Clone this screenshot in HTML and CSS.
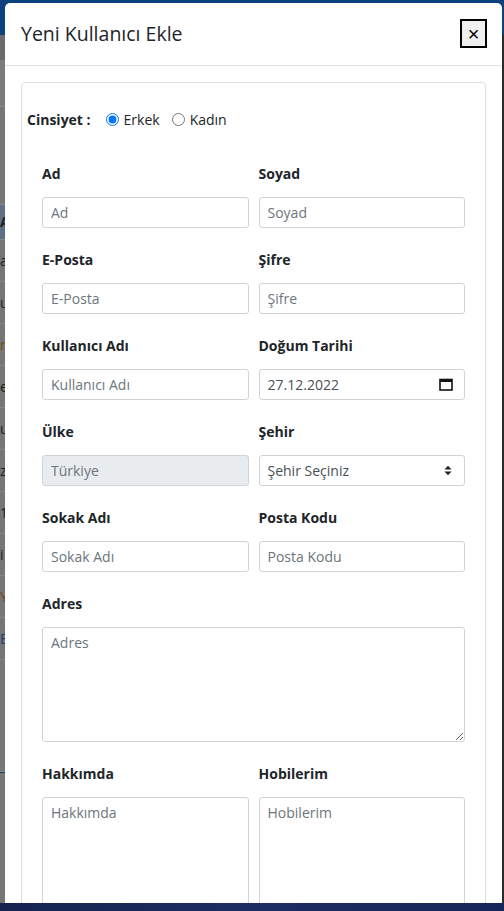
FILE: index.html
```html
<!DOCTYPE html>
<html lang="tr">
<head>
<meta charset="utf-8">
<title>Yeni Kullanıcı Ekle</title>
<link rel="stylesheet" href="styles.css">
</head>
<body>
<div class="page">
  <div class="page-top"></div>
  <div class="page-main">
    <div class="page-rows">
      <div class="row row-a"></div>
      <div class="row row-b"></div>
      <div class="row row-c"></div>
      <div class="row row-head"><span>A</span></div>
      <div class="row"><span>a</span></div>
      <div class="row"><span>u</span></div>
      <div class="row"><span class="orange">r</span></div>
      <div class="row"><span>e</span></div>
      <div class="row"><span>u</span></div>
      <div class="row"><span>z</span></div>
      <div class="row"><span>1</span></div>
      <div class="row"><span>i</span></div>
      <div class="row"><span class="orange">Y</span></div>
      <div class="row"><span class="blue">E</span></div>
      <div class="row row-tall"></div>
      <div class="row row-end"></div>
    </div>
    <div class="page-right"></div>
  </div>
  <div class="taskbar"></div>
</div>

<div class="modal">
  <div class="modal-header">
    <h5 class="modal-title">Yeni Kullanıcı Ekle</h5>
    <button class="close" type="button">×</button>
  </div>
  <div class="modal-body">
    <div class="card">
      <div class="gender">
        <b class="gender-label">Cinsiyet :</b>
        <input class="radio" type="radio" name="cinsiyet" checked>
        <span class="radio-text">Erkek</span>
        <input class="radio" type="radio" name="cinsiyet">
        <span class="radio-text">Kadın</span>
      </div>
      <div class="form-grid">
        <div class="group">
          <label class="label">Ad</label>
          <input class="control" placeholder="Ad">
        </div>
        <div class="group">
          <label class="label">Soyad</label>
          <input class="control" placeholder="Soyad">
        </div>
        <div class="group">
          <label class="label">E-Posta</label>
          <input class="control" placeholder="E-Posta">
        </div>
        <div class="group">
          <label class="label">Şifre</label>
          <input class="control" placeholder="Şifre">
        </div>
        <div class="group">
          <label class="label">Kullanıcı Adı</label>
          <input class="control" placeholder="Kullanıcı Adı">
        </div>
        <div class="group">
          <label class="label">Doğum Tarihi</label>
          <div class="control control-box">
            <input class="inner" value="27.12.2022">
            <svg class="cal" width="14" height="13" viewBox="0 0 14 13"><rect x="1" y="1.5" width="12" height="10.5" fill="none" stroke="#111" stroke-width="1.6"/><rect x="1" y="1" width="12" height="3" fill="#111"/></svg>
          </div>
        </div>
        <div class="group">
          <label class="label">Ülke</label>
          <input class="control" placeholder="Türkiye" disabled>
        </div>
        <div class="group">
          <label class="label">Şehir</label>
          <div class="control control-box">
            <span class="inner select-text">Şehir Seçiniz</span>
            <svg class="updown" width="8" height="11" viewBox="0 0 8 11"><path d="M0.5 4.5 L4 0.8 L7.5 4.5 Z" fill="#222"/><path d="M0.5 6.5 L4 10.2 L7.5 6.5 Z" fill="#222"/></svg>
          </div>
        </div>
        <div class="group">
          <label class="label">Sokak Adı</label>
          <input class="control" placeholder="Sokak Adı">
        </div>
        <div class="group">
          <label class="label">Posta Kodu</label>
          <input class="control" placeholder="Posta Kodu">
        </div>
        <div class="group wide">
          <label class="label">Adres</label>
          <textarea class="control area" placeholder="Adres"></textarea>
        </div>
        <div class="group">
          <label class="label">Hakkımda</label>
          <textarea class="control area" placeholder="Hakkımda"></textarea>
        </div>
        <div class="group">
          <label class="label">Hobilerim</label>
          <textarea class="control area" placeholder="Hobilerim"></textarea>
        </div>
      </div>
    </div>
  </div>
</div>
</body>
</html>
```

FILE: styles.css
```css
* { box-sizing: border-box; }

html, body {
  margin: 0;
  padding: 0;
  height: 911px;
  overflow: hidden;
}

body {
  font-family: "Open Sans", "Noto Sans", "Liberation Sans", sans-serif;
  font-size: 14px;
  color: #212529;
  background: #767676;
  position: relative;
}

/* dimmed page behind the modal */
.page {
  height: 911px;
  display: flex;
  flex-direction: column;
}

.page-top {
  height: 35px;
  background: #0e427e;
  flex: none;
}

.page-main {
  flex: 1;
  display: flex;
  min-height: 0;
}

.page-rows {
  flex: 1;
  display: flex;
  flex-direction: column;
}

.row {
  height: 42px;
  flex: none;
  display: flex;
  align-items: center;
  padding-left: 0;
  border-bottom: 1px solid #878787;
  font-size: 14px;
  line-height: 1;
  color: #1e1e1e;
}

.row span { white-space: nowrap; }
.row-a { height: 25px; background: #6b6b6b; border-bottom-color: #6b6b6b; }
.row-b { height: 47px; background: #7b7b7b; border-bottom-color: #8a8a8a; }
.row-c { height: 98px; }
.row-head { background: #5e6f86; height: 35px; font-weight: 700; }
.orange { color: #6e4a1a; }
.blue { color: #1d3c70; }
.row-tall { height: 112px; }
.row-end { border-bottom: none; border-top: 1px solid #123f7a; height: 200px; }

.page-right {
  width: 2px;
  background: #2a2a2a;
  flex: none;
}

.taskbar {
  height: 8px;
  flex: none;
  background: linear-gradient(90deg, #15244f, #1c2d63 50%, #172659);
  position: relative;
  z-index: 2;
}

/* modal */
.modal {
  position: absolute;
  left: 5px;
  top: 3px;
  width: 497px;
  height: 1000px;
  background: #fff;
  border-radius: 5px;
  z-index: 1;
}

.modal-header {
  display: flex;
  justify-content: space-between;
  align-items: flex-start;
  padding: 16px;
  border-bottom: 1px solid #dee2e6;
}

.modal-title {
  margin: 0;
  font-size: 19.5px;
  font-weight: 400;
  line-height: 30px;
  color: #212529;
}

.close {
  width: 27px;
  height: 29px;
  margin: 0 -1px 0 0;
  padding: 0;
  border: 2px solid #000;
  border-radius: 0;
  background: #efefef;
  font-family: "Liberation Sans", sans-serif;
  font-size: 20px;
  line-height: 24px;
  color: #000;
}

.modal-body {
  padding: 16px;
}

.card {
  border: 1px solid #dfdfdf;
  border-radius: 4px;
  padding: 0 20px;
}

.gender {
  display: flex;
  align-items: center;
  margin: 26px 0 0 -15px;
  line-height: 21px;
}

.gender-label {
  font-weight: 700;
  margin-right: 15px;
}

.radio {
  width: 13px;
  height: 13px;
  margin: 0 5px 0 0;
  accent-color: #0075ff;
}

.radio-text { margin-right: 12px; color: #212529; }

.form-grid {
  display: grid;
  grid-template-columns: 1fr 1fr;
  column-gap: 10px;
  row-gap: 20px;
  margin-top: 32px;
  padding-bottom: 20px;
}

.group { min-width: 0; }
.wide { grid-column: 1 / 3; }

.label {
  display: block;
  font-weight: 700;
  line-height: 21px;
  padding-top: 1px;
  margin-bottom: 13px;
}

.control {
  display: block;
  width: 100%;
  height: 31px;
  padding: 4px 8px;
  border: 1px solid #ced4da;
  border-radius: 3px;
  font-family: inherit;
  font-size: 14px;
  line-height: 21px;
  color: #495057;
  background: #fff;
  outline: none;
}

.control::placeholder { color: #6c757d; opacity: 1; }

.control:disabled {
  background: #e9ecef;
}

.control-box {
  display: flex;
  align-items: center;
}

.inner {
  flex: 1;
  min-width: 0;
  border: none;
  padding: 0;
  font: inherit;
  color: #495057;
  background: transparent;
  outline: none;
}

.cal { flex: none; margin-right: 3px; }
.updown { flex: none; margin-right: 4px; }

.area {
  height: 115px;
  resize: both;
}
```
